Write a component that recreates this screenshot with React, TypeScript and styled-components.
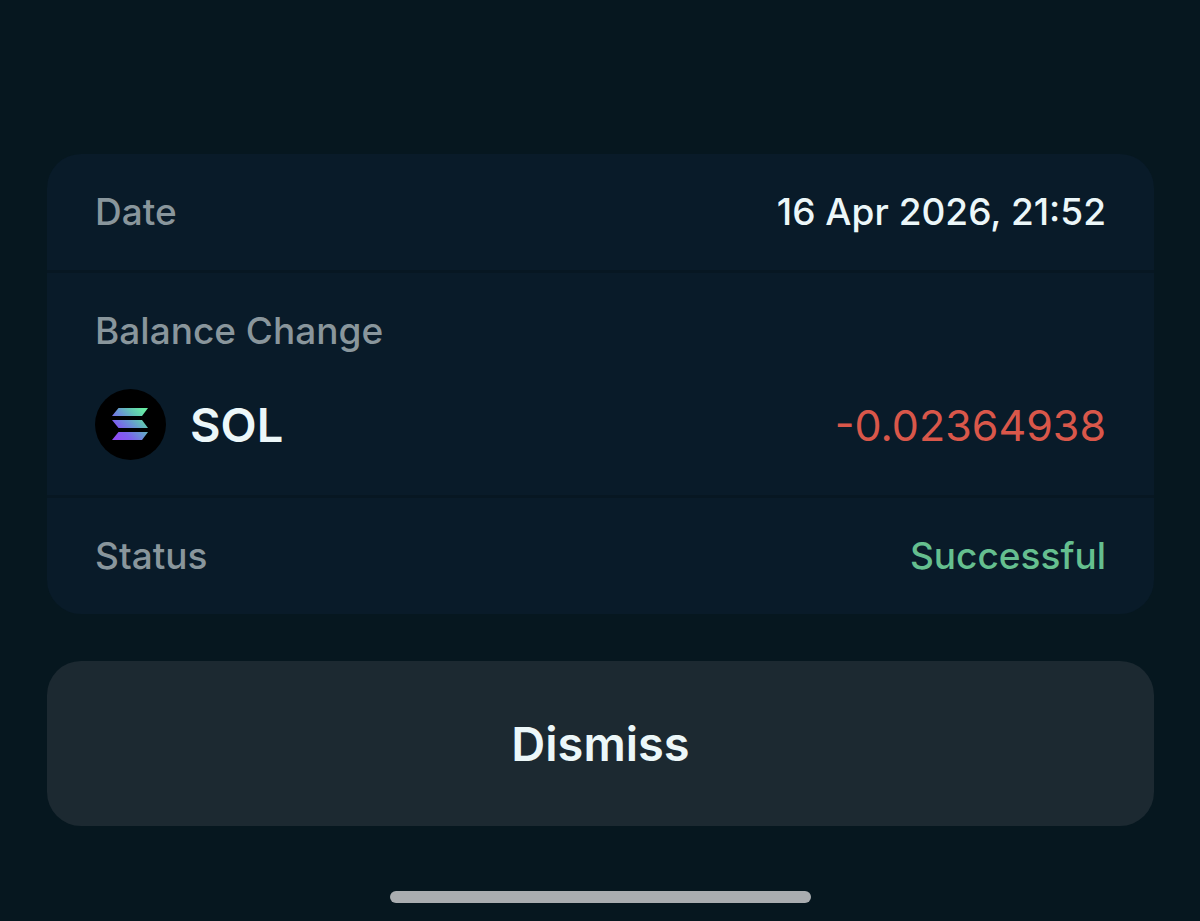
import React from 'react';
import styled, { createGlobalStyle } from 'styled-components';

const GlobalStyle = createGlobalStyle`
  * { box-sizing: border-box; }
  body {
    margin: 0;
    background: #06171f;
    color: #ecf7f9;
    font-family: Inter, "Liberation Sans", sans-serif;
  }
`;

const Screen = styled.main`
  min-height: 100vh;
  padding: 154px 46px 18px 47px;
  display: flex;
  flex-direction: column;
`;

const Card = styled.dl`
  margin: 0;
  border-radius: 34px;
  background: #091b29;
  overflow: hidden;
`;

const Row = styled.div`
  display: flex;
  align-items: center;
  justify-content: space-between;
  padding: 34px 48px;
  line-height: 48px;
`;

const Section = styled.div`
  padding: 34px 48px 35px;
  border-top: 3px solid #071722;
  border-bottom: 3px solid #071722;
`;

const Label = styled.dt`
  color: #89969c;
  font-size: 37px;
  font-weight: 500;
  line-height: 48px;
`;

const Value = styled.dd<{ $success?: boolean }>`
  margin: 0;
  font-size: 37px;
  font-weight: 500;
  color: ${({ $success }) => ($success ? '#65bf8f' : 'inherit')};
`;

const Asset = styled.dd`
  margin: 34px 0 0;
  display: flex;
  align-items: center;
  gap: 24px;
`;

const Ticker = styled.span`
  font-size: 47px;
  line-height: 56px;
  font-weight: 600;
`;

const Amount = styled.span`
  margin-left: auto;
  font-size: 43px;
  line-height: 56px;
  color: #d9574a;
`;

const Dismiss = styled.button`
  margin-top: 47px;
  padding: 52px 24px;
  border: 0;
  border-radius: 34px;
  background: #1c2931;
  color: inherit;
  font: 600 47px/61px Inter, "Liberation Sans", sans-serif;
  cursor: pointer;
`;

const HomeIndicator = styled.div`
  width: 38%;
  height: 12px;
  margin: auto auto 0;
  border-radius: 6px;
  background: #a9adb0;
`;

const SolanaLogo = () => (
  <svg width="71" height="71" viewBox="0 0 71 71" aria-hidden="true">
    <defs>
      <linearGradient id="sol" gradientUnits="userSpaceOnUse" x1="19" y1="47" x2="47" y2="19">
        <stop offset="0" stopColor="#8f4cf5" />
        <stop offset="0.25" stopColor="#7d60ee" />
        <stop offset="0.5" stopColor="#6a91d6" />
        <stop offset="0.75" stopColor="#62c4b5" />
        <stop offset="1" stopColor="#68eba4" />
      </linearGradient>
    </defs>
    <circle cx="35.5" cy="35.5" r="35.5" fill="#000" />
    <path fill="url(#sol)" d="M23.5 19H53l-6 8H17zM17 31H47l6 8H23.5zM23.5 43H53l-6 8H17z" />
  </svg>
);

export default function App() {
  return (
    <>
      <GlobalStyle />
      <Screen>
        <Card>
          <Row>
            <Label>Date</Label>
            <Value>16 Apr 2026, 21:52</Value>
          </Row>
          <Section>
            <Label>Balance Change</Label>
            <Asset>
              <SolanaLogo />
              <Ticker>SOL</Ticker>
              <Amount>-0.02364938</Amount>
            </Asset>
          </Section>
          <Row>
            <Label>Status</Label>
            <Value $success>Successful</Value>
          </Row>
        </Card>
        <Dismiss type="button">Dismiss</Dismiss>
        <HomeIndicator />
      </Screen>
    </>
  );
}
